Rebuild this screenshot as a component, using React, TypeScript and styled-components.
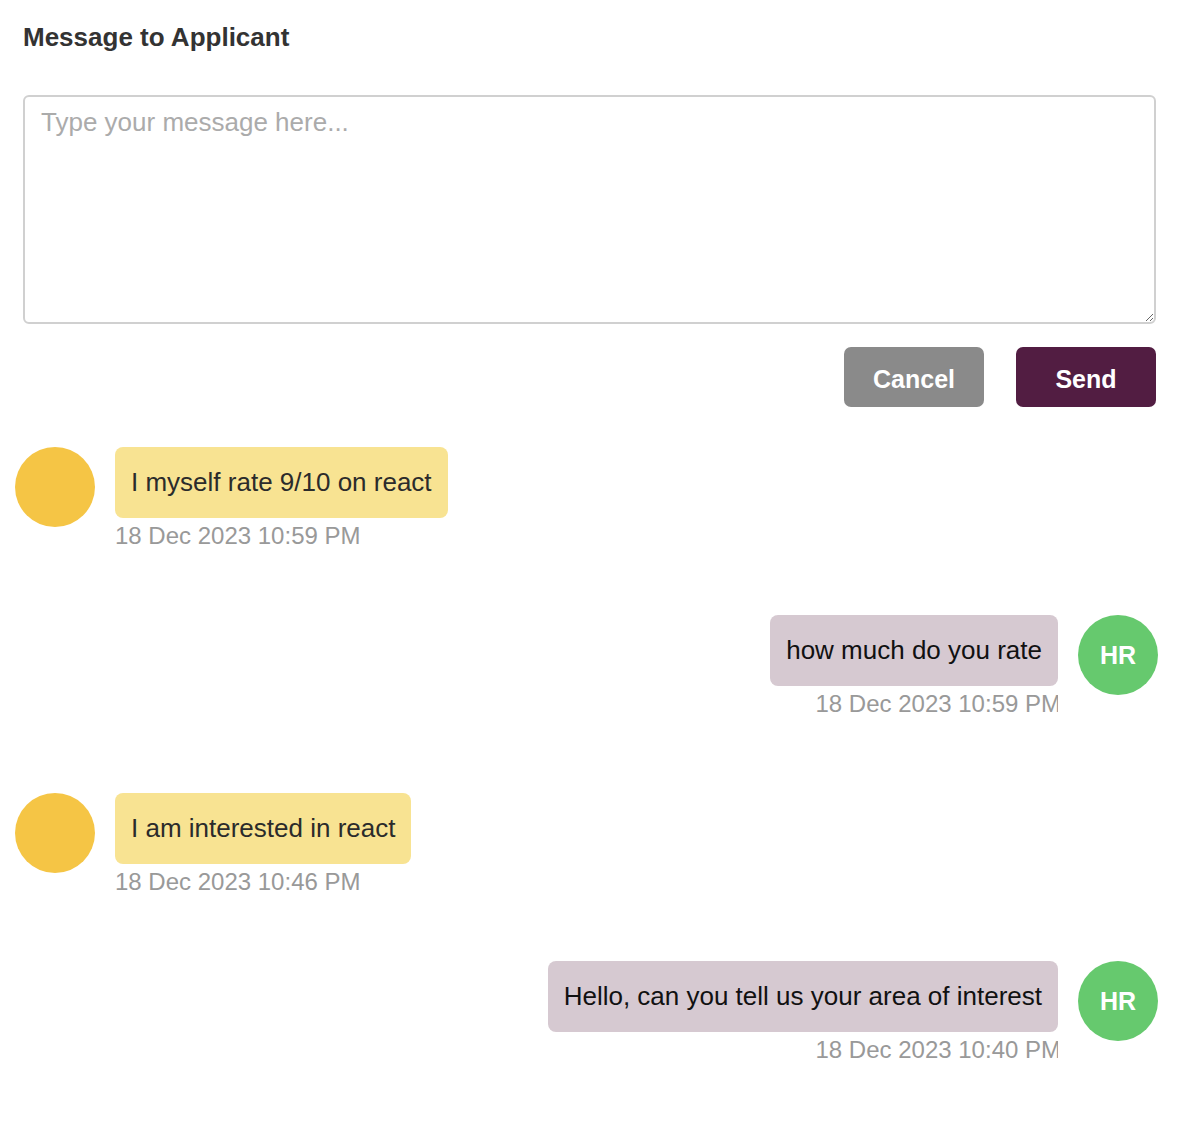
import * as React from "react";
import styled, { createGlobalStyle } from "styled-components";

const GlobalStyle = createGlobalStyle`
  body {
    margin: 0;
    background: #fff;
    font-family: "Liberation Sans", Arial, sans-serif;
  }
`;

interface Message {
  id: number;
  text: string;
  time: string;
  fromHr: boolean;
}

const messages: Message[] = [
  { id: 4, text: "I myself rate 9/10 on react", time: "18 Dec 2023 10:59 PM", fromHr: false },
  { id: 3, text: "how much do you rate", time: "18 Dec 2023 10:59 PM", fromHr: true },
  { id: 2, text: "I am interested in react", time: "18 Dec 2023 10:46 PM", fromHr: false },
  { id: 1, text: "Hello, can you tell us your area of interest", time: "18 Dec 2023 10:40 PM", fromHr: true },
];

const App: React.FC = () => {
  const [draft, setDraft] = React.useState("");

  return (
    <Page>
      <GlobalStyle />
      <Compose>
        <Title>Message to Applicant</Title>
        <MessageInput
          placeholder="Type your message here..."
          value={draft}
          onChange={(e) => setDraft(e.target.value)}
        />
        <Actions>
          <Button variant="cancel" onClick={() => setDraft("")}>
            Cancel
          </Button>
          <Button variant="send">Send</Button>
        </Actions>
      </Compose>
      <Thread>
        {messages.map((m) => (
          <Row key={m.id} mine={m.fromHr}>
            {!m.fromHr && <Avatar mine={false} />}
            <Body mine={m.fromHr}>
              <Bubble mine={m.fromHr}>{m.text}</Bubble>
              <Time mine={m.fromHr}>{m.time}</Time>
            </Body>
            {m.fromHr && <Avatar mine>HR</Avatar>}
          </Row>
        ))}
      </Thread>
    </Page>
  );
};

export default App;

const Page = styled.div`
  padding: 22px 22px 40px 15px;
`;

const Compose = styled.section`
  padding-left: 8px;
  margin-right: 2px;
`;

const Title = styled.h2`
  margin: 0 0 43px;
  font-size: 26px;
  line-height: 30px;
  font-weight: bold;
  color: #333;
`;

const MessageInput = styled.textarea`
  display: block;
  box-sizing: border-box;
  width: 100%;
  height: 229px;
  padding: 10px 16px;
  border: 2px solid #d0d0d0;
  border-radius: 6px;
  font-family: "Liberation Sans", Arial, sans-serif;
  font-size: 26px;
  color: #333;
  outline: none;

  &::placeholder {
    color: #ababab;
  }
`;

const Actions = styled.div`
  display: flex;
  justify-content: flex-end;
  gap: 32px;
  margin-top: 23px;
`;

const Button = styled.button<{ variant: "cancel" | "send" }>`
  width: 140px;
  height: 60px;
  padding: 4px 0 0;
  border: none;
  border-radius: 7px;
  background: ${(p) => (p.variant === "send" ? "#521d42" : "#8a8a8a")};
  color: #fff;
  font-family: "Liberation Sans", Arial, sans-serif;
  font-size: 25px;
  font-weight: bold;
  cursor: pointer;
`;

const Thread = styled.div`
  display: flex;
  flex-direction: column;
  margin-top: 40px;
`;

const Row = styled.div<{ mine: boolean }>`
  display: flex;
  align-items: flex-start;
  justify-content: ${(p) => (p.mine ? "flex-end" : "flex-start")};
  gap: 20px;
  padding-bottom: ${(p) => (p.mine ? "75px" : "65px")};
`;

const Avatar = styled.div<{ mine: boolean }>`
  flex: none;
  width: 80px;
  height: 80px;
  border-radius: 50%;
  background: ${(p) => (p.mine ? "#66c96e" : "#f5c545")};
  display: flex;
  align-items: center;
  justify-content: center;
  color: #fff;
  font-size: 25px;
  font-weight: bold;
`;

const Body = styled.div<{ mine: boolean }>`
  display: flex;
  flex-direction: column;
  align-items: ${(p) => (p.mine ? "flex-end" : "flex-start")};
  overflow: hidden;
`;

const Bubble = styled.div<{ mine: boolean }>`
  padding: 16px;
  border-radius: 8px;
  background: ${(p) => (p.mine ? "#d6c9d1" : "#f8e392")};
  color: ${(p) => (p.mine ? "#111" : "#2b2b2b")};
  font-size: 26px;
  line-height: 39px;
  white-space: nowrap;
`;

const Time = styled.div<{ mine: boolean }>`
  margin-top: 4px;
  margin-right: ${(p) => (p.mine ? "-3px" : "0")};
  font-size: 24px;
  line-height: 28px;
  color: #999;
  white-space: nowrap;
`;
